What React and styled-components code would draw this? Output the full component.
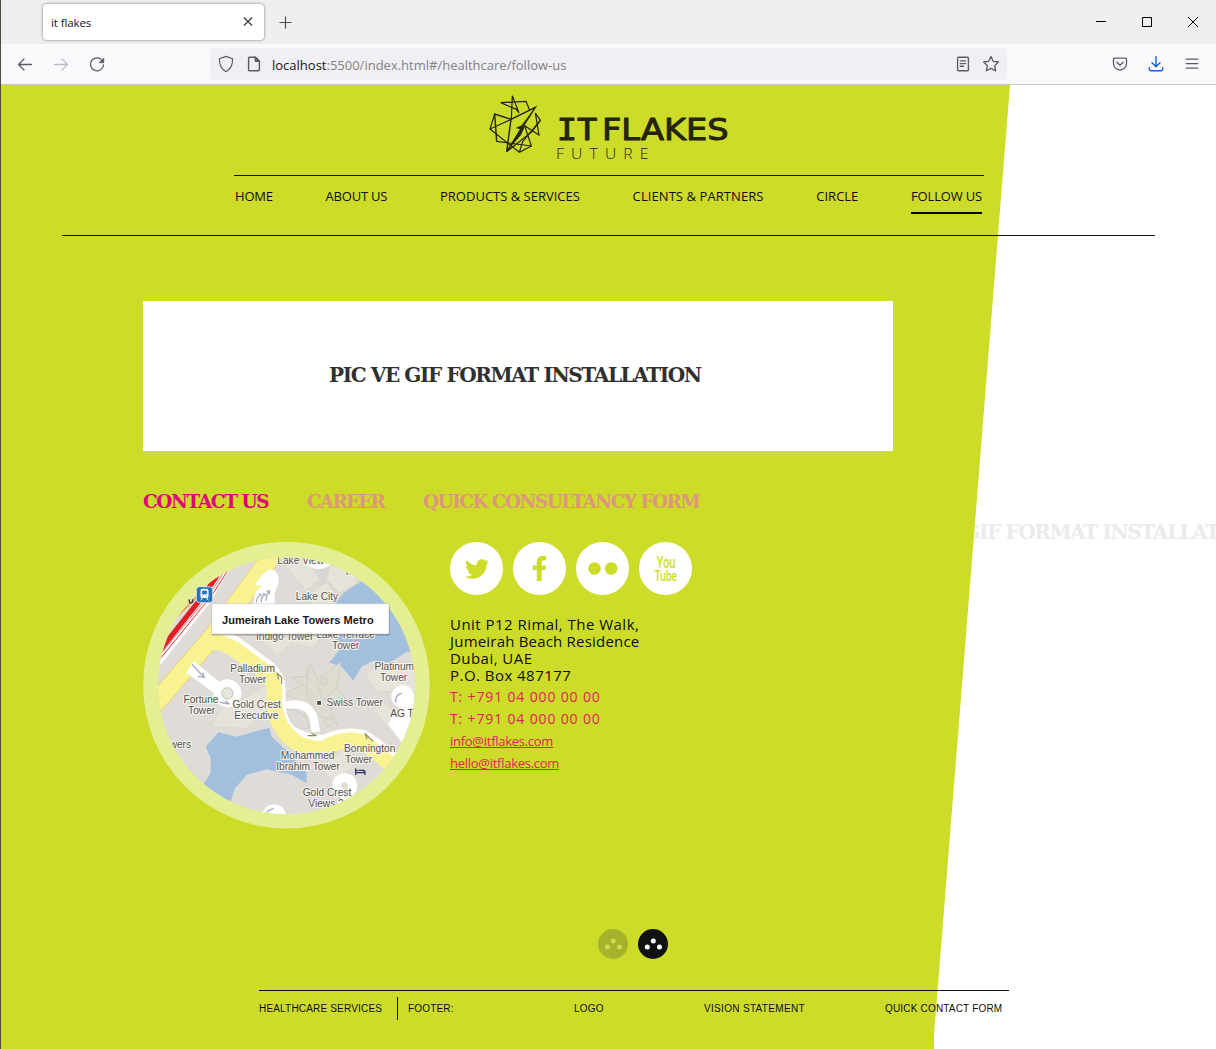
import React from "react";
import styled, { createGlobalStyle } from "styled-components";
import { FaTwitter, FaFacebookF } from "react-icons/fa";

const GREEN = "#cddc29";
const SANS = "'Open Sans', 'Noto Sans', sans-serif";
const SLAB = "'DejaVu Serif', serif";
const ARIAL = "'Liberation Sans', Arial, sans-serif";

const Global = createGlobalStyle`
  *, *::before, *::after { box-sizing: border-box; }
  body { margin: 0; background: #fff; }
`;

/* ---------- browser chrome ---------- */
const Window = styled.div`
  width: 1216px;
  height: 1049px;
  display: flex;
  flex-direction: column;
  overflow: hidden;
  background: #fff;
  border-left: 1px solid #4c4d3c;
  font-family: ${SANS};
`;
const TitleBar = styled.div`
  height: 44px;
  flex: none;
  display: flex;
  align-items: center;
  background: #efefef;
  padding: 0 0 1px 42px;
`;
const Tab = styled.div`
  width: 221px;
  height: 36px;
  display: flex;
  align-items: center;
  justify-content: space-between;
  padding: 1px 9px 0 8px;
  border-radius: 4px;
  background: #fff;
  box-shadow: 0 0 3px rgba(0, 0, 0, 0.5);
  font-size: 11.5px;
  font-weight: 500;
  letter-spacing: -0.1px;
  color: #15141a;
`;
const NewTab = styled.div`
  display: flex;
  margin-left: 15px;
  padding-top: 1px;
`;
const WindowButtons = styled.div`
  display: flex;
  gap: 34px;
  margin-left: auto;
  padding-right: 17px;
`;
const Toolbar = styled.div`
  height: 41px;
  flex: none;
  display: flex;
  align-items: center;
  background: #f9f9fb;
  border-bottom: 1px solid #c8c8cc;
  padding-left: 15px;
`;
const NavButtons = styled.div`
  display: flex;
  gap: 16px;
  width: 194px;
`;
const UrlBar = styled.div`
  width: 797px;
  height: 32px;
  display: flex;
  align-items: center;
  padding: 0 7px;
  border-radius: 4px;
  background: #f0f0f4;
  gap: 10px;
`;
const Url = styled.div`
  flex: 1;
  margin: 2px 0 0 -1px;
  font-size: 13px;
  color: #808086;
  b { font-weight: 400; color: #15141a; }
`;
const ToolIcons = styled.div`
  display: flex;
  gap: 18px;
  margin-left: auto;
  padding-right: 15px;
`;

/* ---------- page ---------- */
const Page = styled.div`
  position: relative;
  z-index: 0;
  flex: 1;
  display: flex;
  flex-direction: column;
  color: #0d0d0d;
  &::before {
    content: "";
    position: absolute;
    inset: 0;
    z-index: -1;
    background: ${GREEN};
    clip-path: polygon(0 0, 1009px 0, 933px 950px, 933px 100%, 0 100%);
  }
`;
const NextSlide = styled.div`
  position: absolute;
  z-index: -2;
  left: 887px;
  top: 434px;
  font: 700 20px/26px ${SLAB};
  letter-spacing: -1.38px;
  white-space: nowrap;
  color: #ebebeb;
`;
const Header = styled.header`
  width: 1093px;
  height: 151px;
  margin-left: 61px;
  border-bottom: 1px solid #111;
  display: flex;
  flex-direction: column;
  flex: none;
`;
const LogoWrap = styled.div`
  height: 90px;
  margin-left: 408px;
`;
const Nav = styled.nav`
  width: 750px;
  margin-left: 172px;
  border-top: 1px solid #111;
  display: flex;
  justify-content: space-between;
  padding: 10px 2px 0 1px;
`;
const NavItem = styled.a`
  height: 28px;
  font-size: 13px;
  line-height: 20px;
  letter-spacing: ${(p) => p.$ls || 0}px;
  white-space: nowrap;
  border-bottom: 2px solid ${(p) => (p.$active ? "#000" : "transparent")};
`;
const Main = styled.main`
  margin: 65px 0 0 142px;
  width: 750px;
  height: 689px;
  flex: none;
  display: flex;
  flex-direction: column;
`;
const Banner = styled.div`
  height: 150px;
  flex: none;
  padding: 0 0 3px 186px;
  display: flex;
  align-items: center;
  background: #fff;
  font: 700 20px/26px ${SLAB};
  letter-spacing: -1.38px;
  color: #303030;
  white-space: nowrap;
`;
const Tabs = styled.div`
  display: flex;
  gap: 38px;
  margin-top: 38px;
  font: 700 18.5px/26px ${SLAB};
  white-space: nowrap;
`;
const TabLink = styled.a`
  width: ${(p) => p.$w}px;
  letter-spacing: ${(p) => p.$ls}px;
  color: ${(p) => (p.$active ? "#e2007a" : "#de967c")};
`;
const Columns = styled.div`
  display: flex;
  gap: 20px;
  margin-top: 27px;
`;
const Contact = styled.div`
  display: flex;
  flex-direction: column;
`;
const Socials = styled.div`
  display: flex;
  gap: 10px;
`;
const Social = styled.a`
  width: 53px;
  height: 53px;
  border-radius: 50%;
  display: flex;
  align-items: center;
  justify-content: center;
  background: #fff;
  color: ${GREEN};
`;
const Address = styled.address`
  margin-top: 21px;
  font-style: normal;
  font-size: 15px;
  line-height: 17px;
  display: flex;
  flex-direction: column;
`;
const Line = styled.span`
  letter-spacing: ${(p) => p.$ls}px;
`;
const Pink = styled.a`
  font-size: ${(p) => p.$size}px;
  line-height: 22px;
  letter-spacing: ${(p) => p.$ls}px;
  color: #e0215c;
  text-decoration: ${(p) => (p.$link ? "underline" : "none")};
`;
const PinkLines = styled.div`
  display: flex;
  flex-direction: column;
  align-items: flex-start;
  margin-top: 2px;
`;
const Pager = styled.div`
  display: flex;
  gap: 10px;
  margin: auto 0 0 455px;
  padding-bottom: 31px;
`;
const Footer = styled.footer`
  width: 750px;
  margin-left: 258px;
  border-top: 1px solid #111;
  display: flex;
  align-items: center;
  padding-top: 6px;
  font: 10px/23px ${ARIAL};
  letter-spacing: 0.18px;
  white-space: nowrap;
`;
const FootItem = styled.span`
  width: ${(p) => p.$w}px;
  letter-spacing: ${(p) => p.$ls || 0.18}px;
`;
const FootTitle = styled.span`
  width: 139px;
  margin-right: 10px;
  border-right: 1px solid #111;
`;

/* ---------- icons ---------- */
const Icon = ({ size = 20, color = "#5b5b66", sw = 1.3, children }) => (
  <svg width={size} height={size} viewBox="0 0 20 20" fill="none" stroke={color} strokeWidth={sw} strokeLinecap="round" strokeLinejoin="round">
    {children}
  </svg>
);

const Logo = () => (
  <svg width="280" height="85" viewBox="0 0 840 255">
    <g fill="none" stroke="#25240f" strokeWidth="3.6" strokeLinejoin="miter">
      <path d="M127 32L124 103M127 32L147 84L139 73L92 53L168 49L179 76" />
      <path d="M123 103L196 67L110 200L123 103L74 87L80 169" strokeWidth="4.2" />
      <path d="M74 87L60 132L148 202L184 183L164 122L207 150L196 84L211 106L158 170L148 202" />
      <path d="M60 132L124 103M80 169L116 174L184 183M110 200L186 140L211 106" />
    </g>
    <path d="M198 64L155 121L137 129L150 133L108 202L153 150L164 126L157 124Z" fill="#25240f" />
    <g fill="#25240f" stroke="#25240f" strokeWidth="3" strokeLinejoin="round">
      <text x="260" y="164" fontFamily="'DejaVu Sans Mono', monospace" fontSize="91" textLength="122" lengthAdjust="spacingAndGlyphs">IT</text>
      <text x="396" y="164" fontFamily="'DejaVu Sans', sans-serif" fontSize="91" textLength="380" lengthAdjust="spacingAndGlyphs">FLAKES</text>
    </g>
    <text x="258" y="222" fontFamily={SANS} fontWeight="300" fontSize="44" fill="#25240f" textLength="299" lengthAdjust="spacingAndGlyphs" letterSpacing="20">FUTURE</text>
  </svg>
);

const LABELS = [
  ["Lake View", 481, 251], ["To", 627, 284], ["Lake City", 530, 361],
  ["Indigo Tower", 433, 481], ["Lake Terrace", 616, 475], ["Tower", 616, 507],
  ["Palladium", 337, 577], ["Tower", 337, 609], ["Platinum", 762, 571], ["Tower", 760, 603],
  ["Fortune", 182, 670], ["Tower", 184, 702], ["Gold Crest", 349, 685], ["Executive", 348, 717],
  ["Swiss Tower", 643, 678], ["AG Tower", 816, 711], ["Towers", 104, 804],
  ["Bonnington", 688, 816], ["Tower", 655, 849], ["Mohammed", 502, 838], ["Ibrahim Tower", 503, 870],
  ["Gold Crest", 560, 948], ["Views 2", 557, 981],
];

const MapBadge = () => (
  <svg width="287" height="287" viewBox="9 186 861 861">
    <defs>
      <clipPath id="disc"><circle cx="439.5" cy="617" r="385.5" /></clipPath>
    </defs>
    <circle cx="439.5" cy="615.5" r="430" fill="#e4ee92" />
    <g clipPath="url(#disc)">
      <rect x="9" y="186" width="861" height="861" fill="#dfdbd6" />
      <path d="M520 225L690 225L665 303L610 340L575 385L540 305L500 330L455 265Z" fill="#dad7d3" />
      <g fill="#e6e4da" stroke="#d8d5cb" strokeWidth="2">
        <path d="M430 250L500 240L540 300L498 330Z" />
        <path d="M570 255L650 280L650 310L600 340L560 300Z" />
        <path d="M505 345L560 305L588 345L575 390L520 390Z" />
        <path d="M355 470L410 528L455 490L520 505L545 470Z" />
        <path d="M675 590L720 545L825 550L825 635L715 635Z" />
        <path d="M700 690L730 668L775 700L745 745Z" />
        <path d="M305 660L378 615L385 680L320 745L215 740L240 690Z" />
        <path d="M540 860L615 805L640 860L580 905Z" />
      </g>
      <path d="M665 303L610 340L570 390L590 490L605 500L575 540L565 547L605 560L640 602L665 560L700 542L750 548L800 515L870 525V303Z" fill="#a3bfde" />
      <path d="M235 757L290 770L388 743L395 770L440 812L500 878L500 910L455 884L380 868L320 885L285 925L270 970L190 912L212 880V835L197 800Z" fill="#a3bfde" />
      <g fill="#dedbd0" stroke="#cbc8bf" strokeWidth="2">
        <path d="M510 548L533 600L603 546L590 622L620 660L570 685L595 735L535 705L490 715L500 675L435 640L488 615L455 590L500 590Z" />
        <path d="M533 600L545 665L590 622M485 610L540 668L570 685M505 560L500 640L535 705" fill="none" />
        <circle cx="553" cy="605" r="9" /><circle cx="567" cy="725" r="13" />
      </g>
      <path d="M412 205L225 462L20 700" fill="none" stroke="#e6cf74" strokeWidth="58" />
      <path d="M412 205L225 462L20 700" fill="none" stroke="#f9f291" strokeWidth="54" />
      <path d="M215 485Q250 478 300 520L375 575Q408 605 403 650Q400 715 438 760Q480 802 550 797Q605 770 660 783Q700 805 760 860" transform="translate(8 -8)" fill="none" stroke="#fff" strokeWidth="51" />
      <path d="M195 487Q250 478 300 520L375 575Q408 605 403 650Q400 715 438 760Q480 810 550 806Q605 774 655 783Q700 805 760 860" fill="none" stroke="#f9f291" strokeWidth="47" />
      <g fill="#fff">
        <path d="M162 543L243 610L226 642L138 578Z" />
        <path d="M345 315Q375 268 395 268Q415 275 416 298Q415 320 403 340L405 372H340Q340 335 365 318Z" />
        <path d="M500 255Q535 282 580 250V225H500Z" />
        <path d="M745 735L760 700L820 660L880 640V880L780 780Z" />
      </g>
      <path d="M430 678Q500 660 520 710L528 755" fill="none" stroke="#fff" strokeWidth="25" />
      <path d="M440 686Q495 690 508 738Q490 758 462 738Q445 720 440 686Z" fill="#dedbd6" stroke="#cac8c2" strokeWidth="2" />
      <circle cx="262" cy="640" r="29" fill="#dfdbd6" stroke="#fff" strokeWidth="26" />
      <circle cx="262" cy="640" r="17" fill="#e7e6dc" stroke="#c4c1bb" strokeWidth="3" />
      <circle cx="788" cy="650" r="34" fill="#fff" />
      <circle cx="614" cy="917" r="24" fill="#dfdbd6" stroke="#fff" strokeWidth="27" />
      <path d="M614 940L645 970V995H575Z" fill="#fff" />
      <circle cx="402" cy="1010" r="37" fill="#fff" />
      <g fill="none" stroke="#a2a9bd" strokeWidth="4">
        <path d="M156 553L192 592L174 589M192 592L188 577M240 667L268 672L256 663M768 668Q764 645 785 640M374 1010Q382 988 402 986" />
        <path d="M349 368Q350 350 363 345L356 341M364 366Q362 350 375 343L368 339M378 362Q378 342 388 334L380 333M388 334V343" />
      </g>
      <path d="M425 612V592L412 580L416 598M503 767H530L514 760M700 784L674 760L682 777" fill="none" stroke="#8a8b60" strokeWidth="3.5" />
      <path d="M95 430L228 270L190 325L70 470Z" fill="#e6e2de" />
      <path d="M90 432L170 350" stroke="#ee9a3c" strokeWidth="5" />
      <g fill="none">
        <path d="M265 245L203 352L50 545" stroke="#fff" strokeWidth="30" />
        <path d="M272 258L215 347L60 537" stroke="#d92a32" strokeWidth="3" />
        <path d="M266 255L209 343L60 525" stroke="#d92a32" strokeWidth="2" />
        <path d="M252 255L197 338L64 506" stroke="#e11d27" strokeWidth="15" />
      </g>
      <g fontFamily={ARIAL} fontSize="30.5" textAnchor="middle" fill="#55504b" stroke="#f6f5f1" strokeWidth="6" strokeLinejoin="round" paintOrder="stroke">
        {LABELS.map(([t, x, y], i) => <text key={i} x={x + 1} y={y}>{t}</text>)}
      </g>
      <rect x="530" y="661" width="15" height="15" fill="#4b4945" stroke="#fff" strokeWidth="3" />
      <path d="M647 865V885M647 878H675M675 873V885M655 871H672V878M651 869V874" fill="none" stroke="#33305f" strokeWidth="3.5" />
    </g>
    <path d="M148 358Q146 370 154 369Q161 366 157 358" fill="none" stroke="#333" strokeWidth="4" />
    <rect x="169" y="320" width="49" height="48" rx="9" fill="#2775b9" stroke="#fff" strokeWidth="2" />
    <path d="M183 331Q183 328 187 328H200Q204 328 204 331V352H183ZM188 353L182 361M199 353L205 361" fill="#fff" stroke="#fff" strokeWidth="3" />
    <path d="M187 333H200V342H187ZM187 348H189M198 348H200" fill="#2775b9" stroke="#2775b9" strokeWidth="2.5" />
    <rect x="214" y="375" width="536" height="93" rx="3" fill="#000" opacity=".13" />
    <rect x="217" y="374" width="531" height="91" rx="3" fill="#555" opacity=".35" />
    <rect x="215" y="371" width="532" height="91" rx="3" fill="#fff" stroke="#bbb" strokeWidth="1.5" />
    <text x="246" y="432" fontFamily={ARIAL} fontWeight="700" fontSize="33" fill="#181818" textLength="455" lengthAdjust="spacingAndGlyphs">Jumeirah Lake Towers Metro</text>
  </svg>
);

const PageDot = ({ bg, fg }) => (
  <svg width="30" height="30" viewBox="0 0 30 30">
    <circle cx="15" cy="15" r="15" fill={bg} />
    <g fill={fg}><circle cx="15.3" cy="12" r="2.5" /><circle cx="9.3" cy="18" r="2.5" /><circle cx="21.5" cy="18" r="2.5" /></g>
  </svg>
);

export default function App() {
  return (
    <Window>
      <Global />
      <TitleBar>
        <Tab>
          it flakes
          <svg width="13" height="13" viewBox="0 0 13 13" stroke="#333" strokeWidth="1.1"><path d="M2 1.5L10 9.500M10 1.500L2 9.500" /></svg>
        </Tab>
        <NewTab><svg width="13" height="13" viewBox="0 0 13 13" stroke="#4c4c55" strokeWidth="1.2"><path d="M6.500 .5V12.500M.5 6.500H12.500" /></svg></NewTab>
        <WindowButtons>
          <svg width="12" height="12" viewBox="0 0 12 12" stroke="#000"><path d="M1 5.500H11" /></svg>
          <svg width="12" height="12" viewBox="0 0 12 12" stroke="#000" fill="none"><path d="M1.500 1.500H10.500V10.500H1.500Z" /></svg>
          <svg width="12" height="12" viewBox="0 0 12 12" stroke="#000"><path d="M1 1L11 11M11 1L1 11" /></svg>
        </WindowButtons>
      </TitleBar>
      <Toolbar>
        <NavButtons>
          <Icon sw={1.3}><path d="M15.500 10.500H2.500M8 5L2.500 10.500L8 16" /></Icon>
          <Icon color="#bcbcc3" sw={1.3}><path d="M2.500 10.500H15.500M10 5L15.500 10.500L10 16" /></Icon>
          <Icon sw={1.3}><path d="M14.800 7.300A6.500 6.500 0 1 0 15.500 11" /><path d="M15.700 4.500V8.700H11.500Z" fill="#5b5b66" strokeWidth=".8" /></Icon>
        </NavButtons>
        <UrlBar>
          <Icon size={18}><path d="M10 1.500L17.300 4.200C17.500 11 15 16 10 18.500C5 16 2.500 11 2.700 4.200Z" /></Icon>
          <Icon size={18} sw={1.6}><path d="M4 3.500Q4 2.500 5 2.500H11.500L16 7V16.500Q16 17.500 15 17.500H5Q4 17.500 4 16.500Z" /><path d="M11.500 2.500V7H16Z" fill="#5b5b66" /></Icon>
          <Url><b>localhost</b>:5500/index.html#/healthcare/follow-us</Url>
          <Icon size={18} sw={1.5}><path d="M5 2.500H15Q16 2.500 16 3.500V16.500Q16 17.500 15 17.500H5Q4 17.500 4 16.500V3.500Q4 2.500 5 2.500ZM7 6.500H13M7 9.500H13M7 12.500H10.500" /></Icon>
          <Icon size={18} sw={1.5}><path d="M10 1.800L12.500 7L18.200 7.800L14.100 11.800L15.100 17.500L10 14.800L4.900 17.500L5.900 11.800L1.800 7.800L7.500 7Z" /></Icon>
        </UrlBar>
        <ToolIcons>
          <Icon size={18} sw={1.5}><path d="M4 3.500H16Q17.200 3.500 17.200 4.700V9.500A7.200 7.200 0 0 1 2.800 9.500V4.700Q2.800 3.500 4 3.500ZM6.500 8L10 11.500L13.500 8" /></Icon>
          <Icon size={18} color="#0f5fd6" sw={1.5}><path d="M10 1.500V12.500M5.500 8.500L10 13L14.500 8.500M2.500 14V15.500Q2.500 17.500 4.500 17.500H15.500Q17.500 17.500 17.500 15.500V14" /></Icon>
          <Icon size={18} sw={1.4}><path d="M3.500 4.500H16.500M3.500 9.500H16.500M3.500 14.500H16.500" /></Icon>
        </ToolIcons>
      </Toolbar>
      <Page>
        <NextSlide>PIC VE GIF FORMAT INSTALLATION</NextSlide>
        <Header>
          <LogoWrap><Logo /></LogoWrap>
          <Nav>
            <NavItem $ls={-0.2}>HOME</NavItem>
            <NavItem $ls={-0.2}>ABOUT US</NavItem>
            <NavItem>PRODUCTS &amp; SERVICES</NavItem>
            <NavItem $ls={0.08}>CLIENTS &amp; PARTNERS</NavItem>
            <NavItem>CIRCLE</NavItem>
            <NavItem $ls={-0.18} $active>FOLLOW US</NavItem>
          </Nav>
        </Header>
        <Main>
          <Banner>PIC VE GIF FORMAT INSTALLATION</Banner>
          <Tabs>
            <TabLink $w={126} $ls={-1.4} $active>CONTACT US</TabLink>
            <TabLink $w={78} $ls={-1.85}>CAREER</TabLink>
            <TabLink $w={277} $ls={-1.55}>QUICK CONSULTANCY FORM</TabLink>
          </Tabs>
          <Columns>
            <MapBadge />
            <Contact>
              <Socials>
                <Social><FaTwitter size={24} /></Social>
                <Social><FaFacebookF size={25} /></Social>
                <Social><svg width="30" height="14" viewBox="0 0 30 14" fill={GREEN}><circle cx="6.500" cy="6.500" r="6.300" /><circle cx="23.200" cy="6.500" r="6.300" /></svg></Social>
                <Social>
                  <svg width="26" height="30" viewBox="0 0 26 30" fill={GREEN} fontFamily="Roboto, sans-serif" fontWeight="500">
                    <text x="3.500" y="14" fontSize="16.500" textLength="19" lengthAdjust="spacingAndGlyphs">You</text>
                    <text x="1.500" y="26.500" fontSize="14" textLength="22.500" lengthAdjust="spacingAndGlyphs">Tube</text>
                  </svg>
                </Social>
              </Socials>
              <Address>
                <Line $ls={0.47}>Unit P12 Rimal, The Walk,</Line>
                <Line $ls={0.2}>Jumeirah Beach Residence</Line>
                <Line $ls={0.45}>Dubai, UAE</Line>
                <Line $ls={0.46}>P.O. Box 487177</Line>
                <PinkLines>
                  <Pink $size={14} $ls={0.85}>T: +791 04 000 00 00</Pink>
                  <Pink $size={14} $ls={0.85}>T: +791 04 000 00 00</Pink>
                  <Pink $size={13} $ls={-0.27} $link>info@itflakes.com</Pink>
                  <Pink $size={13} $ls={-0.27} $link>hello@itflakes.com</Pink>
                </PinkLines>
              </Address>
            </Contact>
          </Columns>
          <Pager>
            <PageDot bg="#a6b32a" fg="#cddc50" />
            <PageDot bg="#111" fg="#fff" />
          </Pager>
        </Main>
        <Footer>
          <FootTitle>HEALTHCARE SERVICES</FootTitle>
          <FootItem $w={166}>FOOTER:</FootItem>
          <FootItem $w={130}>LOGO</FootItem>
          <FootItem $w={181} $ls={0.32}>VISION STATEMENT</FootItem>
          <FootItem $w={120}>QUICK CONTACT FORM</FootItem>
        </Footer>
      </Page>
    </Window>
  );
}
